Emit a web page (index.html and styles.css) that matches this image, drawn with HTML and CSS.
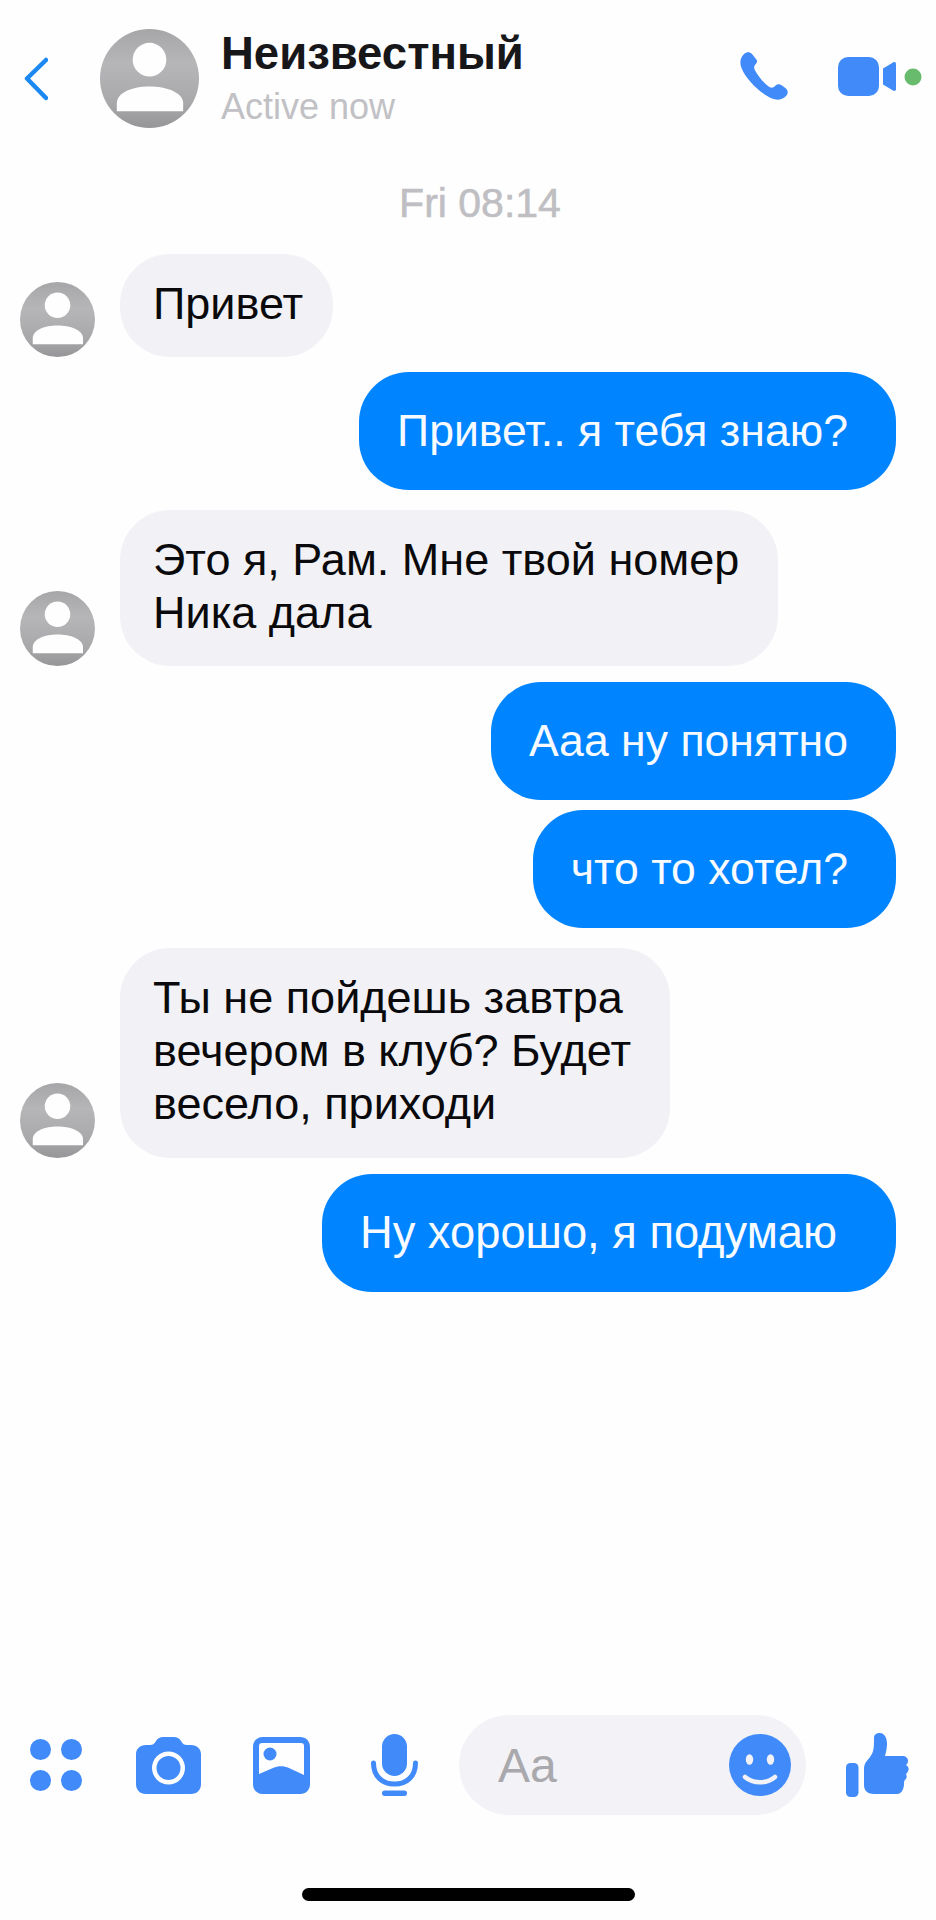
FILE: index.html
```html
<!DOCTYPE html>
<html lang="ru">
<head>
<meta charset="utf-8">
<title>Неизвестный</title>
<link rel="stylesheet" href="styles.css">
</head>
<body>
<svg class="defs" width="0" height="0" aria-hidden="true">
  <defs>
    <linearGradient id="ag" x1="0" y1="0" x2="0" y2="1">
      <stop offset="0" stop-color="#a6a6a8"/>
      <stop offset="0.35" stop-color="#b6b6b8"/>
      <stop offset="0.75" stop-color="#a8a8aa"/>
      <stop offset="1" stop-color="#969698"/>
    </linearGradient>
    <symbol id="avatar" viewBox="0 0 100 100">
      <circle cx="50" cy="50" r="50" fill="url(#ag)"/>
      <circle cx="50" cy="31" r="17" fill="#fefefe"/>
      <path d="M17 83V75C17 64 33 58 50 58C67 58 84 64 84 75V83Z" fill="#fefefe"/>
    </symbol>
  </defs>
</svg>
<main class="screen">
  <header class="header">
    <svg class="back" viewBox="0 0 24 44"><path d="M22 3 3 21.500 22 41" fill="none" stroke="#1c88f2" stroke-width="4.500" stroke-linecap="round" stroke-linejoin="round"/></svg>
    <svg class="avatar-lg"><use href="#avatar"/></svg>
    <div class="who">
      <div class="name">Неизвестный</div>
      <div class="status">Active now</div>
    </div>
    <svg class="phone" viewBox="0 0 48 48"><path fill="#418afa" d="M4 2C7-.5 10 0 12 2L16 7C18 9 17 11 15 13C13.500 14.500 14 17 16 20C19 25 23 30 28 34C31 36.500 33 36 35 34C37 32 39 31.500 42 33.500L46 36.500C48.500 39 48 42 46 44C42 48 37 48.500 32 46.500C22 42.500 6 28 1.500 16C-.5 11 0 6 4 2Z"/></svg>
    <svg class="video" viewBox="0 0 84 40">
      <rect x="0" y="0" width="41" height="39" rx="10" fill="#418afa"/>
      <path fill="#418afa" d="M45 11.500 55 5.500C57 4.500 58 5.500 58 7V32C58 33.500 57 34.500 55 33.500L45 27.500Z"/>
      <circle cx="75" cy="20" r="8.500" fill="#68bb6c"/>
    </svg>
  </header>

  <div class="time">Fri 08:14</div>

  <section class="thread">
    <div class="row in">
      <svg class="avatar-sm"><use href="#avatar"/></svg>
      <div class="bubble gray short">Привет</div>
    </div>
    <div class="row out close">
      <div class="bubble blue">Привет.. я тебя знаю?</div>
    </div>
    <div class="row in far">
      <svg class="avatar-sm"><use href="#avatar"/></svg>
      <div class="bubble gray">Это я, Рам. Мне твой номер<br>Ника дала</div>
    </div>
    <div class="row out">
      <div class="bubble blue">Ааа ну понятно</div>
    </div>
    <div class="row out tight">
      <div class="bubble blue">что то хотел?</div>
    </div>
    <div class="row in far">
      <svg class="avatar-sm"><use href="#avatar"/></svg>
      <div class="bubble gray tall">Ты не пойдешь завтра<br>вечером в клуб? Будет<br>весело, приходи</div>
    </div>
    <div class="row out">
      <div class="bubble blue roomy">Ну хорошо, я подумаю</div>
    </div>
  </section>

  <footer class="composer">
    <svg class="ic-grid" viewBox="0 0 52 52" fill="#418afa">
      <circle cx="10.500" cy="10.500" r="10.500"/><circle cx="41.500" cy="10.500" r="10.500"/>
      <circle cx="10.500" cy="41.500" r="10.500"/><circle cx="41.500" cy="41.500" r="10.500"/>
    </svg>
    <svg class="ic-camera" viewBox="0 0 65 57">
      <path fill="#418afa" fill-rule="evenodd" d="M10 8H14C17 8 18 7 20 4C22 1 24 0 27 0H38C41 0 43 1 45 4C47 7 48 8 51 8H55C61 8 65 12 65 17V47C65 53 61 57 55 57H10C4 57 0 53 0 47V17C0 12 4 8 10 8ZM32.500 14.500A16.500 16.500 0 1 0 32.500 47.500A16.500 16.500 0 1 0 32.500 14.500Z"/>
      <circle cx="32.500" cy="31" r="12" fill="#418afa"/>
    </svg>
    <svg class="ic-image" viewBox="0 0 57 57">
      <path fill="#418afa" fill-rule="evenodd" d="M10 0H47C53 0 57 4 57 10V47C57 53 53 57 47 57H10C4 57 0 53 0 47V10C0 4 4 0 10 0ZM9 6C7 6 6 7 6 9V37L20 31C25 28.500 31 28.500 36 31L51 38V9C51 7 50 6 48 6Z"/>
      <circle cx="17" cy="17" r="6.500" fill="#418afa"/>
    </svg>
    <svg class="ic-mic" viewBox="0 0 47 62">
      <rect x="11" y="0" width="25" height="42" rx="12.500" fill="#418afa"/>
      <path d="M2.500 29C2.500 42 11 50 23.500 50S44.500 42 44.500 29" fill="none" stroke="#418afa" stroke-width="5" stroke-linecap="round"/>
      <rect x="11" y="56.500" width="25" height="5.500" rx="2.700" fill="#418afa"/>
    </svg>
    <div class="input">
      <span class="placeholder">Aa</span>
      <svg class="ic-smile" viewBox="0 0 62 62">
        <circle cx="31" cy="31" r="31" fill="#418afa"/>
        <ellipse cx="20.500" cy="25.500" rx="3.700" ry="5.200" fill="#f3f2f6"/>
        <ellipse cx="41.500" cy="25.500" rx="3.700" ry="5.200" fill="#f3f2f6"/>
        <path d="M16 43C24 50 38 50 46 43" fill="none" stroke="#f3f2f6" stroke-width="4.500" stroke-linecap="round"/>
      </svg>
    </div>
    <svg class="ic-thumb" viewBox="0 0 63 64">
      <rect x="0" y="30" width="12.500" height="34" rx="4.500" fill="#418afa"/>
      <path fill="#418afa" d="M18 36C18 30 21 28 24 24C28 19 28 14 28 5C28 1 31 0 34 0C38 0 41 4 41 11C41 15 40 19 39 23H56C60 23 62 25 62 28C62 30 61 31 60 32C62 33 63 35 62.500 37C62 39 61 40 60 41C61 43 61 45 59 47C58 48 58 49 58 51C58 55 56 61 51 61H28C22 61 18 58 18 52Z"/>
    </svg>
  </footer>
  <div class="home-bar"></div>
</main>
</body>
</html>
```

FILE: styles.css
```css
* { box-sizing: border-box; }

html, body {
  margin: 0;
  padding: 0;
  background: #fefefe;
}

body {
  font-family: "Liberation Sans", Arial, sans-serif;
  color: #0a0a0c;
}

.defs { display: block; width: 0; height: 0; }

.screen {
  width: 936px;
  height: 1920px;
  display: flex;
  flex-direction: column;
  overflow: hidden;
}

/* header */
.header {
  display: flex;
  align-items: flex-start;
  padding: 29px 14px 0 24px;
  height: 128px;
  flex: none;
}
.back { width: 24px; height: 44px; margin-top: 28px; flex: none; }
.avatar-lg { width: 99px; height: 99px; margin-left: 52px; flex: none; }
.who { margin-left: 22px; flex: 1; margin-top: 0; }
.name {
  font-size: 45.500px;
  font-weight: 700;
  line-height: 50px;
  color: #17171a;
}
.status {
  font-size: 36px;
  line-height: 40px;
  margin-top: 8px;
  color: #c1c1c5;
}
.phone { width: 48px; height: 48px; margin-top: 23px; flex: none; }
.video { width: 84px; height: 40px; margin: 28px 0 0 50px; flex: none; }

/* time */
.time {
  margin-top: 53px;
  padding-left: 24px;
  text-align: center;
  font-size: 41px;
  line-height: 44px;
  height: 73px;
  flex: none;
  color: #bfbfc3;
  -webkit-text-stroke: 0.6px #bfbfc3;
}

/* thread */
.thread {
  flex: 1;
  padding: 0 40px 0 20px;
  display: flex;
  flex-direction: column;
}
.row { display: flex; margin-top: 16px; }
.row:first-child { margin-top: 0; }
.row.close { margin-top: 15px; }
.row.far { margin-top: 20px; }
.row.tight { margin-top: 10px; }
.row.in { align-items: flex-end; justify-content: flex-start; }
.row.out { justify-content: flex-end; }

.avatar-sm { width: 75px; height: 75px; margin-right: 25px; flex: none; }

.bubble {
  font-size: 45px;
  line-height: 53px;
  white-space: nowrap;
}
.gray {
  background: #f2f1f5;
  color: #0a0a0c;
  padding: 22.500px 39px 27.500px 33px;
  border-radius: 50px;
}
.gray.short { padding-right: 30px; }
.gray.tall { padding-bottom: 28.500px; }
.blue {
  font-size: 44.600px;
  background: #0084ff;
  color: #f7fbff;
  padding: 32px 48px 33px 38px;
  border-radius: 50px;
}
.blue.roomy { font-size: 45.300px; padding-right: 59px; }

/* composer */
.composer {
  display: flex;
  align-items: center;
  height: 100px;
  padding-left: 30px;
  flex: none;
}
.ic-grid { width: 52px; height: 52px; flex: none; }
.ic-camera { width: 65px; height: 57px; margin-left: 54px; flex: none; }
.ic-image { width: 57px; height: 57px; margin-left: 52px; flex: none; }
.ic-mic { width: 47px; height: 62px; margin-left: 61px; flex: none; }
.input {
  width: 347px;
  height: 100px;
  margin-left: 41px;
  flex: none;
  display: flex;
  align-items: center;
  justify-content: space-between;
  padding: 0 15px 0 39px;
  background: #f3f2f6;
  border-radius: 50px;
}
.placeholder {
  font-size: 48px;
  line-height: 56px;
  padding-top: 2px;
  color: #a9a9ad;
}
.ic-smile { width: 62px; height: 62px; flex: none; }
.ic-thumb { width: 63px; height: 64px; margin-left: 40px; flex: none; }

/* home indicator */
.home-bar {
  width: 333px;
  height: 13px;
  margin: 73px 0 19px 302px;
  background: #000;
  border-radius: 7px;
  flex: none;
}
```
